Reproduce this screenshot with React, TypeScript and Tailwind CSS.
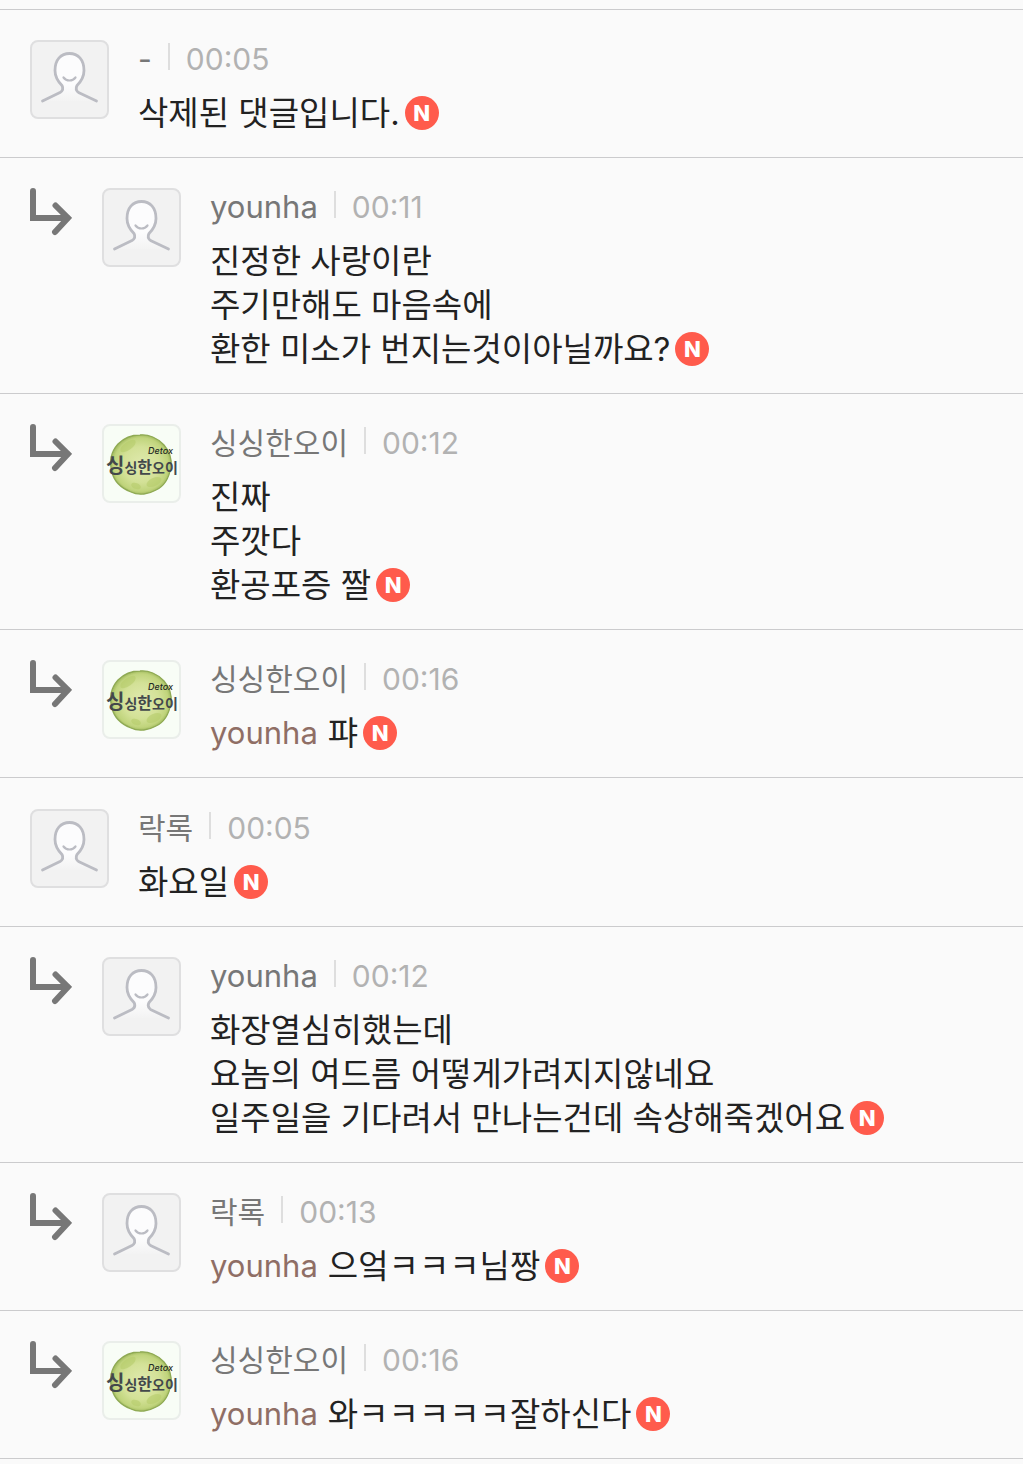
type Comment = {
  id: number;
  author: string;
  time: string;
  lines: string[];
  mention?: string;
  reply?: boolean;
  avatar?: 'cucumber';
};

const threads: Comment[][] = [
  [
    { id: 1, author: '-', time: '00:05', lines: ['삭제된 댓글입니다.'] },
    { id: 2, author: 'younha', time: '00:11', reply: true, lines: ['진정한 사랑이란', '주기만해도 마음속에', '환한 미소가 번지는것이아닐까요?'] },
    { id: 3, author: '싱싱한오이', time: '00:12', reply: true, avatar: 'cucumber', lines: ['진짜', '주깟다', '환공포증 짤'] },
    { id: 4, author: '싱싱한오이', time: '00:16', reply: true, avatar: 'cucumber', mention: 'younha', lines: ['퍄'] },
  ],
  [
    { id: 5, author: '락록', time: '00:05', lines: ['화요일'] },
    { id: 6, author: 'younha', time: '00:12', reply: true, lines: ['화장열심히했는데', '요놈의 여드름 어떻게가려지지않네요', '일주일을 기다려서 만나는건데 속상해죽겠어요'] },
    { id: 7, author: '락록', time: '00:13', reply: true, mention: 'younha', lines: ['으엌ㅋㅋㅋ님짱'] },
    { id: 8, author: '싱싱한오이', time: '00:16', reply: true, avatar: 'cucumber', mention: 'younha', lines: ['와ㅋㅋㅋㅋㅋ잘하신다'] },
  ],
];

const ReplyArrow = () => (
  <svg className="w-[42px] h-[48px] shrink-0" viewBox="0 0 42 48" fill="none" stroke="#777" strokeWidth="6" aria-hidden="true">
    <path d="M3 3V30H37" strokeLinecap="round" strokeLinejoin="miter" />
    <path d="M25.5 17.5L38 30L25 44" strokeLinecap="round" strokeLinejoin="miter" />
  </svg>
);

const DefaultAvatar = () => (
  <svg className="w-full h-full" viewBox="0 0 75 75" fill="none" aria-hidden="true">
    <defs>
      <linearGradient id="person" x1="0" y1="0" x2="0" y2="1">
        <stop offset="0.65" stopColor="#fcfcfd" />
        <stop offset="1" stopColor="#f3f3f3" />
      </linearGradient>
    </defs>
    <path
      d="M10.5 59L28 50.5C30.500 49 31.500 46.500 30 43.500C26 39.500 23 35 23 28.500C23 17.500 29 11.500 37.500 11.500C46 11.500 52 17.500 52 28.500C52 35 49 39.500 45 43.500C43.500 46.500 44.500 49 46.500 50.500L64.500 59"
      fill="url(#person)"
      stroke="#bbbcc3"
      strokeWidth="2.8"
      strokeLinecap="round"
      strokeLinejoin="round"
    />
    <path d="M31.5 35.5C34.5 39.500 40.500 39.500 43.500 35.500" stroke="#bbbcc3" strokeWidth="2.2" strokeLinecap="round" />
  </svg>
);

const CucumberAvatar = () => (
  <svg className="w-full h-full" viewBox="0 0 75 75" role="img" aria-label="싱싱한오이 Detox">
    <defs>
      <radialGradient id="slice">
        <stop offset="0" stopColor="#dfe9ae" />
        <stop offset="0.6" stopColor="#d3e197" />
        <stop offset="0.9" stopColor="#c0d47c" />
        <stop offset="1" stopColor="#a5bd62" />
      </radialGradient>
    </defs>
    <path
      d="M36 9C44 8 54 12 60 19C66 26 68 33 67 41C65 52 61 60 52 64C45 68 35 70 27 66C17 62 10 55 8 46C5 36 7 26 14 18C20 12 27 9 36 9Z"
      fill="url(#slice)"
      stroke="#8faa54"
      strokeWidth="1.3"
    />
    <g fill="#b7cd6c" opacity="0.6">
      <ellipse cx="24" cy="20" rx="9" ry="4" transform="rotate(-35 24 20)" />
      <ellipse cx="50" cy="56" rx="8" ry="4" transform="rotate(-25 50 56)" />
      <ellipse cx="32" cy="60" rx="5" ry="3" transform="rotate(20 32 60)" />
    </g>
    <text x="2" y="47" fill="#43484b" fontFamily="'Noto Sans CJK KR', sans-serif" fontWeight="700">
      <tspan fontSize="20">싱</tspan>
      <tspan fontSize="14">싱</tspan>
      <tspan fontSize="16">한</tspan>
      <tspan fontSize="14">오</tspan>
      <tspan fontSize="14">이</tspan>
    </text>
    <text x="44" y="28" fontSize="9" fill="#252a24" fontFamily="Inter, sans-serif" fontWeight="500" fontStyle="italic">
      Detox
    </text>
  </svg>
);

const NewBadge = () => (
  <span className="flex items-center justify-center w-[34px] h-[34px] ml-[5px] rounded-full bg-[#ff5b4c] text-white text-[22px] leading-none font-extrabold">
    N
  </span>
);

const CommentRow = ({ comment }: { comment: Comment }) => {
  const { author, time, lines, mention, reply, avatar } = comment;
  const last = lines.length - 1;

  return (
    <li className="flex items-start px-[30px] pt-[30px] pb-[22px] border-b border-[#cbcbcd]">
      {reply && (
        <div className="w-[72px] shrink-0">
          <ReplyArrow />
        </div>
      )}
      <div
        className={
          avatar === 'cucumber'
            ? 'w-[79px] h-[79px] shrink-0 rounded-lg border-2 border-[#eaeeea] bg-[#f8fdf6] overflow-hidden'
            : 'w-[79px] h-[79px] shrink-0 rounded-lg border-2 border-[#dfdfe0] bg-[#f2f2f2] overflow-hidden'
        }
      >
        {avatar === 'cucumber' ? <CucumberAvatar /> : <DefaultAvatar />}
      </div>
      <div className="flex-1 min-w-0 ml-[29px]">
        <div className="flex items-center h-[38px] mb-[13px] text-[30px] leading-[38px]">
          <span className={author === 'younha' ? 'text-[31px] text-[#777]' : 'text-[#777]'}>{author}</span>
          <span className="w-[2px] h-[27px] mx-4 mb-[6px] bg-[#dedede]" />
          <time className="text-[#b2b2b2]">{time}</time>
        </div>
        <div className="text-[33px] leading-[44px] text-[#222]">
          {lines.map((line, i) => (
            <p key={i} className="flex items-center h-[44px] whitespace-nowrap">
              {mention && i === 0 && <span className="mr-[10px] text-[31px] text-[#8f6e65]">{mention}</span>}
              {line}
              {i === last && <NewBadge />}
            </p>
          ))}
        </div>
      </div>
    </li>
  );
};

const App = () => {
  return (
    <main className="min-h-screen bg-[#fafafa] pt-[9px] font-['Inter','Noto_Sans_CJK_KR',sans-serif]" lang="ko">
      <div className="border-t border-[#cbcbcd] space-y-px">
        {threads.map((thread) => (
          <ul key={thread[0].id}>
            {thread.map((comment) => (
              <CommentRow key={comment.id} comment={comment} />
            ))}
          </ul>
        ))}
      </div>
    </main>
  );
};

export default App;
